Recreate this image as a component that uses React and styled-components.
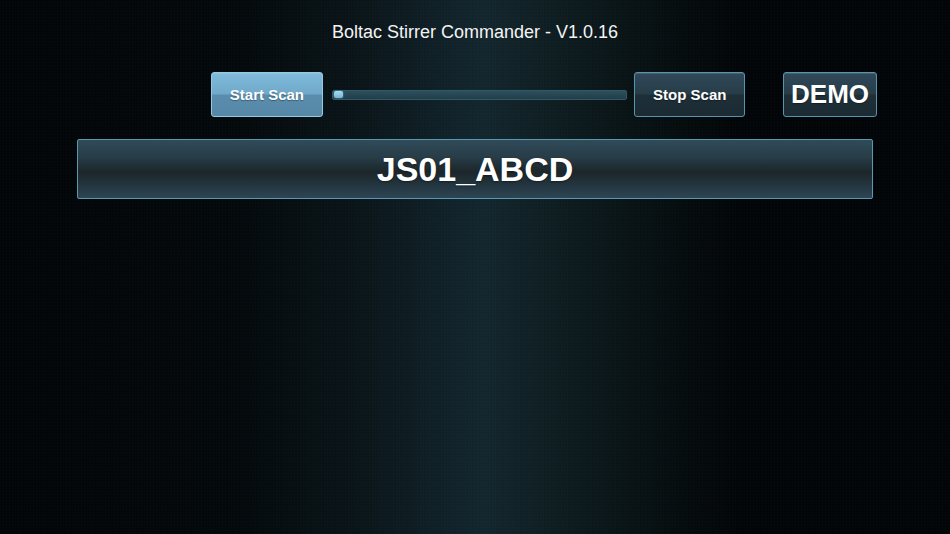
import React from 'react';
import styled, { createGlobalStyle } from 'styled-components';

const GlobalStyle = createGlobalStyle`
    html, body {
        margin: 0;
        padding: 0;
        background: #020507;
    }
    body {
        font-family: "Liberation Sans", Arial, sans-serif;
    }
`;

const Screen = styled.div`
    width: 950px;
    height: 534px;
    overflow: hidden;
    background:
        repeating-linear-gradient(0deg, rgba(255, 255, 255, 0.008) 0 1px, transparent 1px 3px),
        repeating-linear-gradient(90deg, rgba(255, 255, 255, 0.008) 0 1px, transparent 1px 3px),
        linear-gradient(90deg, #020507 0%, #03080a 24%, #0a1519 38%, #11222a 48%, #13262d 51%, #0d1b1e 60%, #060e10 70%, #020507 78%, #020507 100%);
    display: flex;
    flex-direction: column;
`;

const Title = styled.h1`
    margin: 0;
    padding-top: 21px;
    height: 23px;
    font-size: 18px;
    font-weight: normal;
    line-height: 23px;
    text-align: center;
    color: #f2f4f4;
`;

const Toolbar = styled.div`
    display: flex;
    align-items: center;
    margin: 28px 0 0 211px;
    width: 666px;
    height: 45px;
`;

const Button = styled.div`
    box-sizing: border-box;
    width: ${({ $width }) => $width}px;
    height: 45px;
    margin-right: ${({ $gap = 0 }) => $gap}px;
    display: flex;
    align-items: center;
    justify-content: center;
    border-radius: 3px;
    font-weight: bold;
    font-size: ${({ $size = 15 }) => $size}px;
    color: #ffffff;
    border: 1px solid ${({ $active }) => ($active ? '#93cbe4' : '#5595ae')};
    background: ${({ $active }) =>
        $active
            ? 'linear-gradient(180deg, #80bbdb 0%, #70a9ca 48%, #5a8dad 52%, #5687a6 100%)'
            : 'linear-gradient(180deg, #30495a 0%, #273d48 48%, #1e2f37 52%, #1c2b33 100%)'};
    box-shadow: inset 0 1px 0 rgba(255, 255, 255, 0.12);
    text-shadow: 0 1px 1px rgba(0, 0, 0, 0.35);
`;

const Progress = styled.div`
    box-sizing: border-box;
    width: 296px;
    height: 10px;
    margin-right: 7px;
    display: flex;
    align-items: center;
    padding: 0 1px;
    border-radius: 2px;
    border: 1px solid #2f5968;
    background: linear-gradient(180deg, #2d4f5d 0%, #223e49 100%);
`;

const Thumb = styled.div`
    width: 9px;
    height: 7px;
    border-radius: 2px;
    background: linear-gradient(180deg, #a8dcf1 0%, #74b5d3 100%);
    box-shadow: 0 0 2px rgba(140, 205, 235, 0.7);
`;

const Device = styled.div`
    box-sizing: border-box;
    height: 60px;
    margin: 22px 77px 0 77px;
    display: flex;
    align-items: center;
    justify-content: center;
    border: 1px solid #5a98b1;
    border-radius: 2px;
    background: linear-gradient(180deg, #304b59 0%, #273c47 30%, #1c262a 55%, #243742 80%, #2d4553 100%);
    color: #ffffff;
    font-size: 34px;
    font-weight: bold;
    text-shadow: 0 1px 2px rgba(0, 0, 0, 0.4);
`;

const App = () => (
    <>
        <GlobalStyle />
        <Screen>
            <Title>Boltac Stirrer Commander - V1.0.16</Title>
            <Toolbar>
                <Button $active $width={112} $gap={9}>Start Scan</Button>
                <Progress>
                    <Thumb />
                </Progress>
                <Button $width={111} $gap={38}>Stop Scan</Button>
                <Button $width={94} $size={26}>DEMO</Button>
            </Toolbar>
            <Device>JS01_ABCD</Device>
        </Screen>
    </>
);

export default App;
